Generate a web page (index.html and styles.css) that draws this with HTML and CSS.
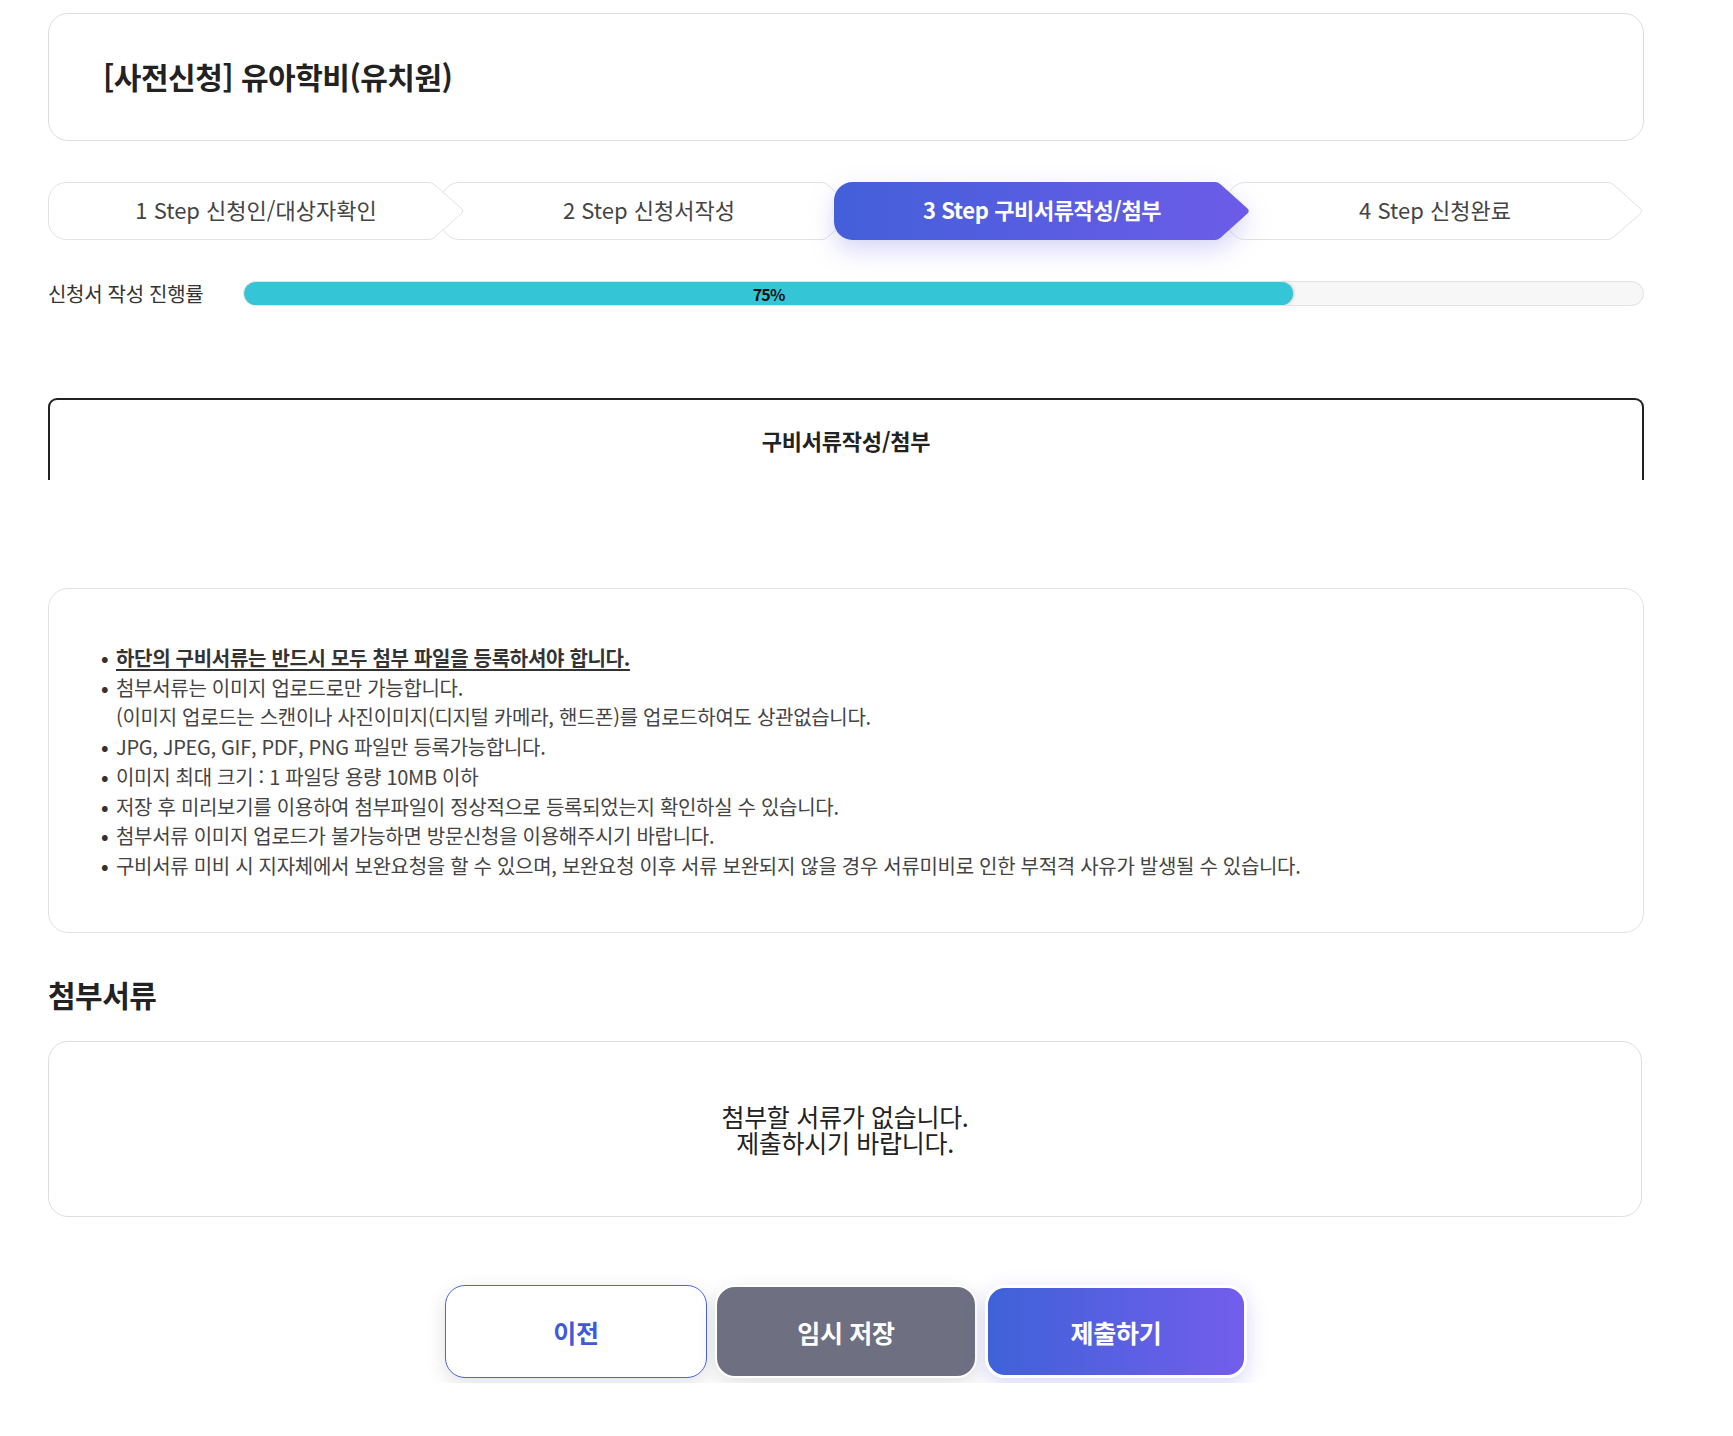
FILE: index.html
```html
<!DOCTYPE html>
<html lang="ko">
<head>
<meta charset="utf-8">
<title>[사전신청] 유아학비(유치원)</title>
<link rel="stylesheet" href="styles.css">
</head>
<body>
<div class="page">
  <div class="title-box">
    <h1 class="title">[사전신청] 유아학비(유치원)</h1>
  </div>

  <div class="steps">
    <div class="step step-1">
      <svg class="step-shape" width="416" height="58" viewBox="0 0 416 58"><path d="M18.5,0.5 H381 Q384,0.5 386.5,2.8 L413.5,26.5 Q416,29 413.5,31.5 L386.5,55.2 Q384,57.5 381,57.5 H18.5 A18,18 0 0 1 0.5,39.5 V18.5 A18,18 0 0 1 18.5,0.5 Z"/></svg>
      <span class="step-label">1 Step 신청인/대상자확인</span>
    </div>
    <div class="step step-2">
      <svg class="step-shape" width="416" height="58" viewBox="0 0 416 58"><path d="M18.5,0.5 H381 Q384,0.5 386.5,2.8 L413.5,26.5 Q416,29 413.5,31.5 L386.5,55.2 Q384,57.5 381,57.5 H18.5 A18,18 0 0 1 0.5,39.5 V18.5 A18,18 0 0 1 18.5,0.5 Z"/></svg>
      <span class="step-label">2 Step 신청서작성</span>
    </div>
    <div class="step step-3 active">
      <svg class="step-shape" width="416" height="58" viewBox="0 0 416 58"><defs><linearGradient id="g-step" x1="0" y1="0" x2="1" y2="0"><stop offset="0" stop-color="#435fd9"/><stop offset="1" stop-color="#6c5ce8"/></linearGradient></defs><path d="M18.5,0 H381 Q384,0 386.5,2.3 L413.5,26.5 Q416,29 413.5,31.5 L386.5,55.7 Q384,58 381,58 H18.5 A18.5,18.5 0 0 1 0,39.5 V18.5 A18.5,18.5 0 0 1 18.5,0 Z"/></svg>
      <span class="step-label">3 Step 구비서류작성/첨부</span>
    </div>
    <div class="step step-4">
      <svg class="step-shape" width="416" height="58" viewBox="0 0 416 58"><path d="M18.5,0.5 H381 Q384,0.5 386.5,2.8 L413.5,26.5 Q416,29 413.5,31.5 L386.5,55.2 Q384,57.5 381,57.5 H18.5 A18,18 0 0 1 0.5,39.5 V18.5 A18,18 0 0 1 18.5,0.5 Z"/></svg>
      <span class="step-label">4 Step 신청완료</span>
    </div>
  </div>

  <div class="progress-row">
    <span class="progress-label">신청서 작성 진행률</span>
    <div class="progress-track">
      <div class="progress-fill" style="width: 75%"><span class="progress-value">75%</span></div>
    </div>
  </div>

  <div class="section-tab">
    <h2 class="section-title">구비서류작성/첨부</h2>
  </div>

  <div class="notice-box">
    <ul class="notice-list">
      <li class="strong">하단의 구비서류는 반드시 모두 첨부 파일을 등록하셔야 합니다.</li>
      <li>첨부서류는 이미지 업로드로만 가능합니다.<br>(이미지 업로드는 스캔이나 사진이미지(디지털 카메라, 핸드폰)를 업로드하여도 상관없습니다.</li>
      <li>JPG, JPEG, GIF, PDF, PNG 파일만 등록가능합니다.</li>
      <li>이미지 최대 크기 : 1 파일당 용량 10MB 이하</li>
      <li>저장 후 미리보기를 이용하여 첨부파일이 정상적으로 등록되었는지 확인하실 수 있습니다.</li>
      <li>첨부서류 이미지 업로드가 불가능하면 방문신청을 이용해주시기 바랍니다.</li>
      <li>구비서류 미비 시 지자체에서 보완요청을 할 수 있으며, 보완요청 이후 서류 보완되지 않을 경우 서류미비로 인한 부적격 사유가 발생될 수 있습니다.</li>
    </ul>
  </div>

  <h3 class="docs-heading">첨부서류</h3>
  <div class="docs-box">
    <div class="docs-empty">
      <p class="docs-line">첨부할 서류가 없습니다.</p>
      <p class="docs-line">제출하시기 바랍니다.</p>
    </div>
  </div>

  <div class="btn-row">
    <button class="btn btn-prev" type="button">이전</button>
    <button class="btn btn-save" type="button">임시 저장</button>
    <button class="btn btn-submit" type="button">제출하기</button>
  </div>
</div>
</body>
</html>
```

FILE: styles.css
```css
* { box-sizing: border-box; }

html, body {
  margin: 0;
  padding: 0;
  background: #fff;
}

body {
  font-family: "Noto Sans CJK KR", "Noto Sans", sans-serif;
  color: #333;
}

.page {
  width: 1596px;
  margin-left: 48px;
  padding-top: 13px;
}

/* title */
.title-box {
  height: 128px;
  border: 1px solid #dedede;
  border-radius: 20px;
  display: flex;
  align-items: center;
  padding: 0 54px 2px 54px;
}

.title {
  margin: 0;
  font-size: 30px;
  font-weight: 700;
  color: #222;
  letter-spacing: -0.5px;
  line-height: 1;
}

/* steps */
.steps {
  display: flex;
  margin-top: 41px;
  height: 58px;
}

.step {
  position: relative;
  width: 416px;
  height: 58px;
  flex: 0 0 416px;
  margin-left: -23px;
  display: flex;
  align-items: center;
  justify-content: center;
  padding-bottom: 4px;
}

.step-1 { margin-left: 0; z-index: 4; }
.step-2 { z-index: 3; }
.step-3 { z-index: 10; }
.step-4 { z-index: 1; }

.step-shape {
  position: absolute;
  left: 0;
  top: 0;
  display: block;
}

.step-shape path {
  fill: #fff;
  stroke: #e2e2e2;
  stroke-width: 1;
}

.step.active .step-shape {
  filter: drop-shadow(0 10px 12px rgba(96, 92, 230, 0.25));
}

.step.active .step-shape path {
  fill: url(#g-step);
  stroke: none;
}

.step-label {
  position: relative;
  font-size: 22px;
  color: #444;
  letter-spacing: 0;
  line-height: 1;
}

.step.active .step-label {
  color: #fff;
  font-weight: 700;
  letter-spacing: -0.4px;
}

/* progress */
.progress-row {
  display: flex;
  align-items: center;
  margin-top: 41px;
  height: 25px;
}

.progress-label {
  flex: 0 0 195px;
  font-size: 20px;
  color: #333;
  letter-spacing: -0.3px;
  line-height: 25px;
}

.progress-track {
  flex: 1;
  height: 25px;
  background: #f7f7f7;
  border: 1px solid #e2e2e2;
  border-radius: 13px;
  overflow: hidden;
}

.progress-fill {
  height: 100%;
  background: #34c5d6;
  border-radius: 12px;
  box-shadow: 1px 0 3px rgba(0, 0, 0, 0.2);
  display: flex;
  align-items: center;
  justify-content: center;
}

.progress-value {
  font-size: 16px;
  font-weight: 700;
  color: #111;
  letter-spacing: -0.8px;
  line-height: 1;
}

/* section tab */
.section-tab {
  margin-top: 92px;
  height: 82px;
  border: 2px solid #222;
  border-bottom: none;
  border-radius: 9px 9px 0 0;
  display: flex;
  align-items: center;
  justify-content: center;
}

.section-title {
  margin: 0;
  font-size: 22px;
  font-weight: 700;
  color: #222;
  letter-spacing: -0.2px;
  line-height: 1;
}

/* notice */
.notice-box {
  margin-top: 108px;
  height: 345px;
  border: 1px solid #e2e2e2;
  border-radius: 20px;
  padding: 54px 52px 0 52px;
}

.notice-list {
  list-style: none;
  margin: 0;
  padding: 0;
}

.notice-list li {
  font-size: 20px;
  line-height: 29.7px;
  color: #444;
  letter-spacing: -0.3px;
  padding-left: 15px;
}

.notice-list li::before {
  content: "•";
  display: inline-block;
  width: 15px;
  margin-left: -15px;
  color: #333;
  font-weight: 700;
}

.notice-list li.strong {
  font-weight: 700;
  color: #333;
  text-decoration: underline;
  text-underline-offset: 3px;
}

/* docs */
.docs-heading {
  margin: 41px 0 0 0;
  font-size: 30px;
  font-weight: 700;
  color: #222;
  line-height: 40px;
  letter-spacing: -0.5px;
}

.docs-box {
  margin-top: 27px;
  margin-right: 2px;
  height: 176px;
  border: 1px solid #dedede;
  border-radius: 20px;
  display: flex;
  align-items: center;
  justify-content: center;
}

.docs-empty {
  text-align: center;
  color: #222;
}

.docs-line {
  margin: 0;
  font-size: 25px;
  line-height: 26.5px;
  letter-spacing: -0.3px;
}

/* buttons */
.btn-row {
  margin-top: 43px;
  padding: 25px 0 5px 0;
  display: flex;
  justify-content: center;
  gap: 8px;
  overflow: hidden;
}

.btn {
  width: 262px;
  height: 93px;
  border-radius: 20px;
  font-family: "Noto Sans CJK KR", "Noto Sans", sans-serif;
  font-size: 25px;
  font-weight: 700;
  letter-spacing: -0.3px;
  cursor: pointer;
  box-shadow: 0 6px 20px rgba(0, 0, 0, 0.12);
}

.btn-prev {
  background: #fff;
  border: 1px solid #4a66dc;
  color: #3f5ad6;
}

.btn-save {
  background: #6e7081;
  border: 2px solid #fff;
  color: #fff;
}

.btn-submit {
  background: linear-gradient(90deg, #3f62d8 0%, #735dec 100%);
  border: 3px solid #fff;
  color: #fff;
  box-shadow: 0 6px 20px rgba(100, 90, 230, 0.25);
}
```
